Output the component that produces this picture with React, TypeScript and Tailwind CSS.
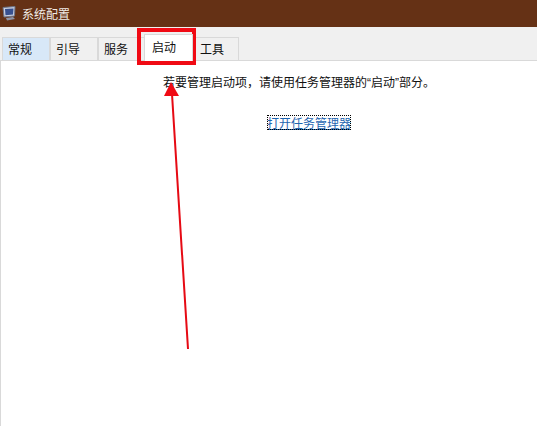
const font = { fontFamily: '"Noto Sans CJK SC", "Liberation Sans", sans-serif' };

const tabBase = "flex items-center border border-b-0 border-[#d9d9d9]";

function AppIcon() {
  return (
    <svg width="15" height="15" viewBox="0 0 15 15">
      <path d="M1 1.5 L13 0.5 L12.5 10 L2 11 Z" fill="#c9cfe0" stroke="#6d7488" strokeWidth="1" />
      <path d="M3 3 L11.5 2.4 L11 8.5 L3.5 9.2 Z" fill="#37508f" />
      <path d="M4 12 L11 11 L13 13 L5 14.5 Z" fill="#8d93a6" />
    </svg>
  );
}

export default function App() {
  return (
    <div className="relative h-[426px] w-[537px] overflow-hidden bg-white text-[12px] text-[#111111]" style={font}>
      <div className="flex h-[27px] items-center gap-[5px] bg-[#653115] pl-[2px] text-[#f0ebe6]">
        <AppIcon />
        <span className="text-[12px]">系统配置</span>
      </div>

      <div className="flex h-[34px] items-end border-b border-[#d9d9d9] bg-[#f0f0f0] pl-[2px]">
        <div className={`${tabBase} h-[23px] w-[48px] bg-[#d8e8f8] pl-[5px]`}>常规</div>
        <div className={`${tabBase} h-[23px] w-[48px] pl-[5px]`}>引导</div>
        <div className={`${tabBase} h-[23px] w-[47px] pl-[5px]`}>服务</div>
        <div className={`${tabBase} z-10 -mb-px ml-[-1px] h-[27px] w-[49px] bg-white pb-[2px] pl-[7px]`}>启动</div>
        <div className={`${tabBase} ml-[-1px] h-[23px] w-[47px] pl-[7px]`}>工具</div>
      </div>

      <div className="flex h-[365px] flex-col items-start border-l border-[#d9d9d9] pl-[162px]">
        <p className="mt-[12px] text-[12px] leading-[17px]">
          若要管理启动项，请使用任务管理器的
          <span className="font-['Liberation_Sans']">“</span>
          启动
          <span className="font-['Liberation_Sans']">”</span>
          部分。
        </p>
        <a className="mt-[23px] ml-[104px] text-[12px] leading-[15px] text-[#1f66b0] underline outline-1 -outline-offset-1 outline-black outline-dotted">
          打开任务管理器
        </a>
      </div>

      {/* annotations on top of the screenshot */}
      <div className="absolute left-[137px] top-[28px] h-[37px] w-[59px] border-[4px] border-[#f00a14]" />
      <svg className="absolute left-0 top-0" width="537" height="426">
        <path d="M188 349 L172 94" stroke="#e60a14" strokeWidth="2" fill="none" />
        <path d="M171 82 L179 96 L164 96 Z" fill="#f00a14" />
      </svg>
    </div>
  );
}
